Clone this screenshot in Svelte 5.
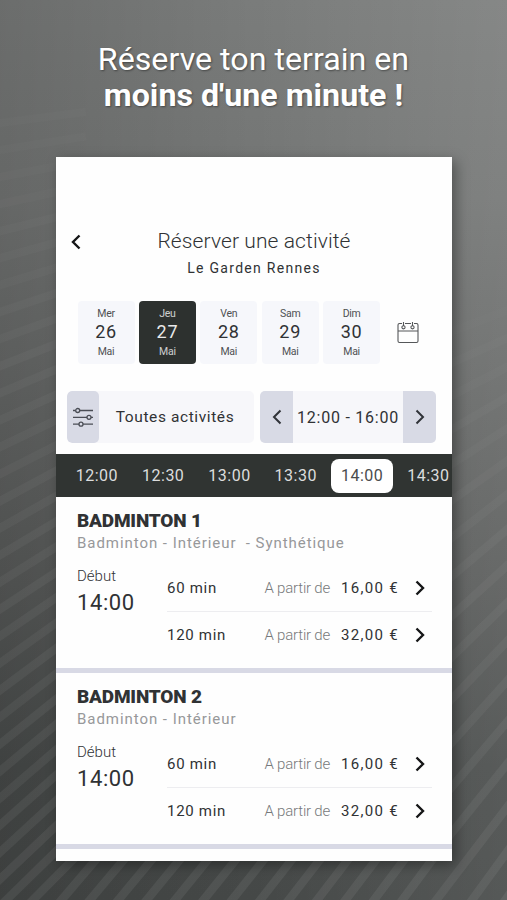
<script>
  const days = [
    { name: 'Mer', num: 26, month: 'Mai' },
    { name: 'Jeu', num: 27, month: 'Mai' },
    { name: 'Ven', num: 28, month: 'Mai' },
    { name: 'Sam', num: 29, month: 'Mai' },
    { name: 'Dim', num: 30, month: 'Mai' },
  ]
  const slots = ['12:00', '12:30', '13:00', '13:30', '14:00', '14:30']
  const prices = [
    { duration: '60 min', price: '16,00 €' },
    { duration: '120 min', price: '32,00 €' },
  ]
  const courts = [
    { name: 'BADMINTON 1', info: 'Badminton - Intérieur \u00a0- Synthétique', start: '14:00' },
    { name: 'BADMINTON 2', info: 'Badminton - Intérieur', start: '14:00' },
  ]

  let selectedDay = $state(27)
  let selectedSlot = $state('14:00')

  // background rays, getting steeper towards the bottom
  const rays = []
  for (let y = 123; y < 950; y += 27) {
    const rise = 8 + ((y - 123) / 777) * 52
    rays.push({ d: `M-6 ${y + rise * 0.1}L86 ${y - rise * 1.39}`, o: 0.008 + (y / 900) * 0.055 })
  }
  for (let x = 62; x < 420; x += 28.5) {
    rays.push({ d: `M${x - 9} 910L${x + 40} ${854 - x / 40}`, o: 0.065 })
  }
  for (let i = 0; i < 18; i++) {
    const y = 310 + i * 27 + i * i * 0.6
    const rise = 23 + i * 4
    rays.push({ d: `M430 ${y + rise * 1.3}L512 ${y - rise * 0.06}`, o: 0.012 + i * 0.0033 })
  }
</script>

{#snippet chevron(dir)}
  <svg class="chevron" class:left={dir === 'left'} viewBox="0 0 10 16" width="10" height="16">
    <path d="M1.5 1.5 8 8l-6.5 6.5" />
  </svg>
{/snippet}

<div class="screen">
  <svg class="rays" viewBox="0 0 507 900" width="507" height="900">
    {#each rays as ray}
      <path d={ray.d} stroke-opacity={ray.o} />
    {/each}
  </svg>

  <h1>
    <span>Réserve ton terrain en</span>
    <strong>moins d'une minute !</strong>
  </h1>

  <div class="card">
    <header>
      <button class="back" aria-label="Retour">{@render chevron('left')}</button>
      <div class="heading">
        <div class="title">Réserver une activité</div>
        <div class="club">Le Garden Rennes</div>
      </div>
    </header>

    <div class="days">
      {#each days as day}
        <button class="day" class:active={day.num === selectedDay} onclick={() => (selectedDay = day.num)}>
          <span class="small">{day.name}</span>
          <span class="num">{day.num}</span>
          <span class="small">{day.month}</span>
        </button>
      {/each}
      <svg class="calendar" viewBox="0 0 22 23" width="22" height="23">
        <path d="M5 2.5H2.5a1.5 1.5 0 0 0-1.5 1.5v16a1.5 1.5 0 0 0 1.5 1.5h17a1.5 1.5 0 0 0 1.5-1.5V4a1.5 1.5 0 0 0-1.5-1.5H17M8 2.5h6M1 10h20M6.5 1v4M15.5 1v4" />
        <circle cx="6.5" cy="6.3" r="1.6" />
        <circle cx="15.5" cy="6.3" r="1.6" />
      </svg>
    </div>

    <div class="filters">
      <div class="activity">
        <div class="side">
          <svg class="sliders" viewBox="0 0 22 20" width="22" height="20">
            <path d="M1 3.500h2.500M8 3.500h13M1 10.300h14M19 10.300h2M1 17.200h6M11 17.200h10" />
            <circle cx="5.700" cy="3.500" r="2" />
            <circle cx="17" cy="10.300" r="2" />
            <circle cx="9" cy="17.200" r="2" />
          </svg>
        </div>
        <span>Toutes activités</span>
      </div>
      <div class="range">
        <button class="side" aria-label="Avant">{@render chevron('left')}</button>
        <span>12:00 - 16:00</span>
        <button class="side" aria-label="Après">{@render chevron('right')}</button>
      </div>
    </div>

    <div class="slots">
      {#each slots as slot}
        <button class="slot" class:active={slot === selectedSlot} onclick={() => (selectedSlot = slot)}>{slot}</button>
      {/each}
    </div>

    {#each courts as court}
      <section class="court">
        <div class="court-name">{court.name}</div>
        <div class="court-info">{court.info}</div>
        <div class="court-body">
          <div class="start">
            <div class="label">Début</div>
            <div class="time">{court.start}</div>
          </div>
          <div class="offers">
            {#each prices as p}
              <div class="offer">
                <span class="duration">{p.duration}</span>
                <span class="from">A partir de</span>
                <span class="price">{p.price}</span>
                {@render chevron('right')}
              </div>
            {/each}
          </div>
        </div>
      </section>
    {/each}
  </div>
</div>

<style>
  :global(body) {
    margin: 0;
    overflow: hidden;
  }
  .screen {
    position: relative;
    width: 507px;
    height: 900px;
    overflow: hidden;
    font-family: Roboto, 'Liberation Sans', sans-serif;
    color: #303234;
    background:
      linear-gradient(90deg, rgba(0,0,0,0.12), rgba(0,0,0,0) 50%, rgba(255,255,255,0.09)),
      linear-gradient(180deg, #7a7c7b 0%, #737574 22%, #686a69 40%, #585a59 65%, #484b4a 85%, #454847 100%);
  }
  .rays {
    position: absolute;
    inset: 0;
  }
  .rays path {
    stroke: #fff;
    stroke-width: 8.5;
    fill: none;
  }
  button {
    border: none;
    background: none;
    padding: 0;
    margin: 0;
    font: inherit;
    color: inherit;
    letter-spacing: inherit;
  }
  h1 {
    position: relative;
    margin: 0;
    height: 157px;
    padding-top: 41px;
    box-sizing: border-box;
    text-align: center;
    font-size: 32.2px;
    line-height: 36px;
    font-weight: 400;
    color: #fff;
    text-shadow: 1px 1px 2px rgba(0,0,0,0.4);
  }
  h1 span, h1 strong { display: block; }
  h1 strong { font-weight: 700; }
  .card {
    position: relative;
    width: 396px;
    height: 704px;
    margin-left: 56px;
    overflow: hidden;
    background: #fefefe;
    box-shadow: 4px 4px 12px rgba(0,0,0,0.35);
  }
  .chevron {
    fill: none;
    stroke: #151617;
    stroke-width: 2.4;
    display: block;
  }
  .chevron.left { transform: scaleX(-1); }
  header {
    display: grid;
    grid-template-columns: 40px 1fr 40px;
    padding-top: 72px;
    height: 72px;
  }
  .back {
    align-self: start;
    padding: 5px 0 0 15px;
  }
  .heading { text-align: center; }
  .title {
    font-size: 21px;
    line-height: 24px;
    font-weight: 300;
    letter-spacing: 0.1px;
  }
  .club {
    margin-top: 5px;
    font-size: 14px;
    line-height: 20px;
    letter-spacing: 1.3px;
  }
  .days {
    display: flex;
    align-items: center;
    gap: 4.4px;
    padding-left: 21.5px;
    height: 63px;
  }
  .day {
    width: 57px;
    height: 63px;
    border-radius: 4px;
    background: #f6f7fb;
    display: flex;
    flex-direction: column;
    align-items: center;
    justify-content: center;
  }
  .day.active {
    background: #2d312f;
    color: #e9eaea;
  }
  .small {
    font-size: 10.5px;
    line-height: 16px;
    letter-spacing: -0.3px;
    opacity: 0.85;
  }
  .num {
    font-size: 18px;
    line-height: 22px;
    letter-spacing: 0.7px;
    margin-top: -1px;
    margin-bottom: 1px;
  }
  .calendar {
    margin-left: 12.5px;
    fill: none;
    stroke: #555759;
    stroke-width: 1.1;
  }
  .filters {
    display: flex;
    gap: 6px;
    margin: 27px 16px 11px 11px;
    height: 52px;
    font-size: 16px;
  }
  .activity, .range {
    display: flex;
    border-radius: 5px;
    overflow: hidden;
    background: #f7f7fa;
  }
  .activity { width: 187px; }
  .range { width: 176px; }
  .activity span, .range span {
    flex: 1;
    align-self: center;
    text-align: center;
    white-space: nowrap;
  }
  .activity span {
    font-size: 15.5px;
    letter-spacing: 0.6px;
    padding-right: 3px;
  }
  .range span { letter-spacing: 0.75px; }
  .side {
    display: flex;
    align-items: center;
    justify-content: center;
    width: 33px;
    background: #d8dae5;
  }
  .activity .side {
    width: 32px;
    border-radius: 5px;
  }
  .side .chevron {
    stroke: #303338;
    stroke-width: 2;
  }
  .sliders {
    fill: none;
    stroke: #4a4d55;
    stroke-width: 1.3;
  }
  .slots {
    display: flex;
    align-items: center;
    gap: 4.5px;
    height: 43px;
    padding-left: 10px;
    background: #303432;
    color: #dcdddd;
    font-size: 16px;
    letter-spacing: 0.5px;
  }
  .slot {
    flex: none;
    width: 61.8px;
    height: 34px;
    border-radius: 8px;
    white-space: nowrap;
  }
  .slot.active {
    background: #fff;
    color: #4a4c4d;
  }
  .court {
    height: 176px;
    padding: 13px 20px 0 21px;
    box-sizing: border-box;
    border-bottom: 5px solid #d8d9e5;
  }
  .court-name {
    font-size: 19px;
    line-height: 22px;
    font-weight: 900;
    letter-spacing: -0.2px;
  }
  .court-info {
    font-size: 15px;
    line-height: 22px;
    letter-spacing: 0.95px;
    color: #97989a;
  }
  .court-body {
    display: grid;
    grid-template-columns: 90px 1fr;
    margin-top: 11px;
  }
  .label {
    font-size: 15px;
    line-height: 22px;
    font-weight: 300;
  }
  .time {
    font-size: 22px;
    line-height: 31px;
    letter-spacing: 0.6px;
  }
  .offer {
    display: flex;
    align-items: center;
    height: 46px;
    font-size: 15px;
    padding-right: 7px;
  }
  .offer + .offer { border-top: 1px solid #ededf0; }
  .offer .duration { letter-spacing: 0.7px; }
  .from {
    margin-left: auto;
    margin-right: 11px;
    font-weight: 300;
    letter-spacing: -0.2px;
    color: #77797b;
  }
  .price { letter-spacing: 1.3px; }
  .offer .chevron { margin-left: 16px; }
</style>
